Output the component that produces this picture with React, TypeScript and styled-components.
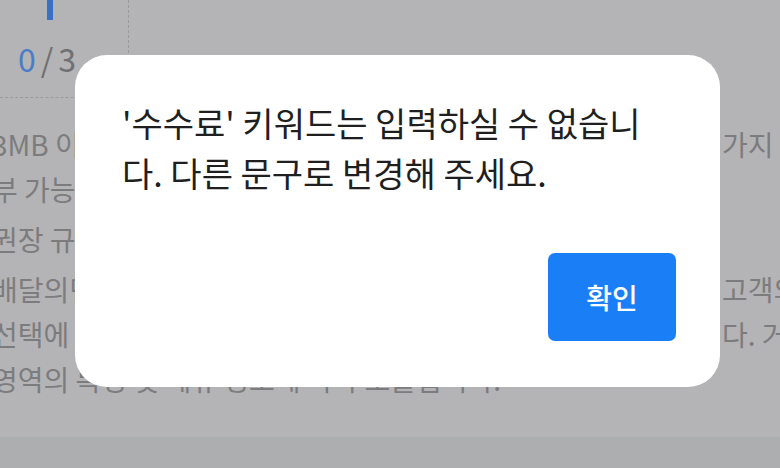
import styled, { createGlobalStyle } from "styled-components";

const GlobalStyle = createGlobalStyle`
  html, body {
    margin: 0;
    padding: 0;
  }
  body {
    font-family: "Noto Sans CJK KR", "Noto Sans", sans-serif;
  }
`;

type NoteLine = { text: string; tail?: string };

const NOTES: NoteLine[][] = [
  [
    { text: "3MB 이하의 이미지 파일만 등록할 수 있으며, 최대 3", tail: "가지 종류" },
    { text: "부 가능합니다." },
  ],
  [{ text: "권장 규격은 가로 1,000px 이상입니다." }],
  [
    { text: "배달의민족 앱에 노출되는 이미지로, 가게를 찾는", tail: "고객의" },
    { text: "선택에 도움이 되는 이미지를 등록해 주시기 바랍니", tail: "다. 거" },
    { text: "영역의 특성 및 메뉴 정보에 따라 노출됩니다." },
  ],
];

export default function App() {
  return (
    <>
      <GlobalStyle />
      <Page>
        {/* 상단 입력 카운터 */}
        <TopRow>
          <CounterCell>
            <Caret />
            <Counter>
              <Current>0</Current>/3
            </Counter>
          </CounterCell>
        </TopRow>

        {/* 안내 문구 */}
        <Notes>
          {NOTES.map((para, i) => (
            <Para key={i}>
              {para.map((line) => (
                <Line key={line.text}>
                  <LineText>{line.text}</LineText>
                  {line.tail && <Tail>{line.tail}</Tail>}
                </Line>
              ))}
            </Para>
          ))}
        </Notes>

        <BottomBar />

        {/* 알림 */}
        <Dialog role="alertdialog">
          <Message>
            '수수료' 키워드는 입력하실 수 없습니
            <br />
            다. 다른 문구로 변경해 주세요.
          </Message>
          <Actions>
            <ConfirmButton type="button">확인</ConfirmButton>
          </Actions>
        </Dialog>
      </Page>
    </>
  );
}

/* =========================
 * styles
 * ========================= */

const Page = styled.div`
  position: relative;
  width: 780px;
  height: 468px;
  overflow: hidden;
  display: flex;
  flex-direction: column;
  background: #b4b4b6;
  color: #7c7c7e;
`;

const TopRow = styled.div`
  display: flex;
  height: 98px;
  flex-shrink: 0;
`;

const CounterCell = styled.div`
  width: 129px;
  box-sizing: border-box;
  border-right: 1px dashed #9a9a9c;
  border-bottom: 1px dashed #9a9a9c;
  display: flex;
  flex-direction: column;
`;

const Caret = styled.div`
  margin-left: 47px;
  width: 6px;
  height: 20px;
  background: #3b6fc4;
`;

const Counter = styled.div`
  margin-top: 22px;
  padding-left: 18px;
  font-size: 32px;
  line-height: 1;
  letter-spacing: 5px;
  color: #707072;
`;

const Current = styled.span`
  color: #4a7dc6;
`;

const Notes = styled.div`
  margin-left: -8px;
  width: 800px;
  padding-top: 24px;
  display: flex;
  flex-direction: column;
  gap: 5px;
  font-size: 28px;
  line-height: 45px;
`;

const Para = styled.div`
  display: flex;
  flex-direction: column;
`;

const Line = styled.div`
  display: flex;
  justify-content: space-between;
  white-space: nowrap;
`;

const LineText = styled.span`
  overflow: hidden;
`;

const Tail = styled.span`
  width: 70px;
  flex-shrink: 0;
  overflow: hidden;
`;

const BottomBar = styled.div`
  margin-top: auto;
  height: 31px;
  background: #adaeb0;
`;

const Dialog = styled.div`
  position: absolute;
  left: 75px;
  top: 55px;
  width: 645px;
  height: 332px;
  box-sizing: border-box;
  padding: 43px 44px 46px 47px;
  display: flex;
  flex-direction: column;
  justify-content: space-between;
  background: #ffffff;
  border-radius: 32px;
`;

const Message = styled.p`
  margin: 0;
  font-size: 34px;
  line-height: 50px;
  color: #1f1f1f;
`;

const Actions = styled.div`
  display: flex;
  justify-content: flex-end;
`;

const ConfirmButton = styled.button`
  width: 128px;
  height: 88px;
  border: none;
  border-radius: 7px;
  background: #1a7ff6;
  color: #ffffff;
  font-family: inherit;
  font-size: 28px;
  font-weight: 500;
  cursor: pointer;
`;
